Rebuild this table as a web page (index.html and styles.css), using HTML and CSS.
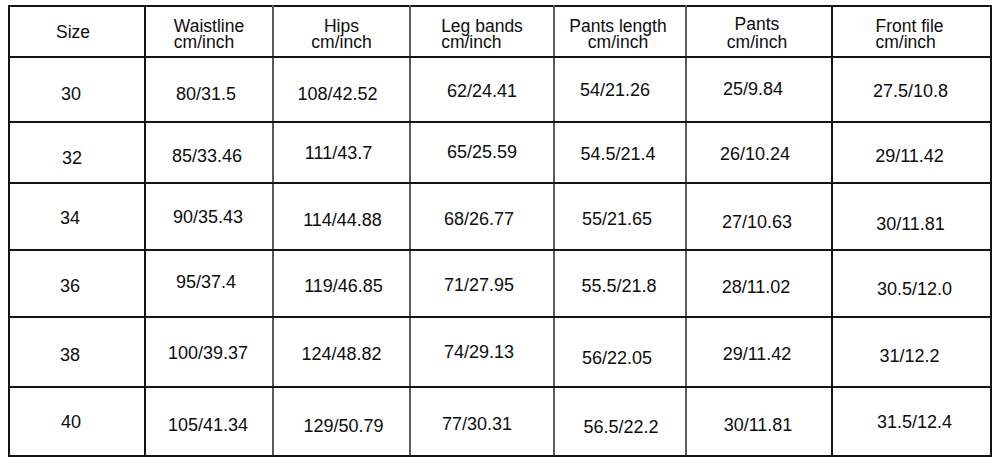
FILE: index.html
```html
<!DOCTYPE html>
<html>
<head>
<meta charset="utf-8">
<link rel="stylesheet" href="styles.css">
</head>
<body>
<table class="size-table">
  <colgroup>
    <col class="c1"><col class="c2"><col class="c3"><col class="c4"><col class="c5"><col class="c6"><col class="c7">
  </colgroup>
  <thead>
    <tr class="row-head">
      <th class="l4 h-size"><span class="line">Size</span></th>
      <th><span class="stack left"><span class="line">Waistline</span><span class="line">cm/inch</span></span></th>
      <th><span class="stack"><span class="line">Hips</span><span class="line">cm/inch</span></span></th>
      <th><span class="stack left"><span class="line">Leg bands</span><span class="line">cm/inch</span></span></th>
      <th class="l2"><span class="stack"><span class="line">Pants length</span><span class="line">cm/inch</span></span></th>
      <th class="l2 h-pants"><span class="stack"><span class="line">Pants</span><span class="line">cm/inch</span></span></th>
      <th class="l2"><span class="stack left"><span class="line">Front file</span><span class="line">cm/inch</span></span></th>
    </tr>
  </thead>
  <tbody>
    <tr class="row-1">
      <td class="l6 d5">30</td><td class="l3 d5">80/31.5</td><td class="l4 d5">108/42.52</td><td class="d2">62/24.41</td><td class="l5 d1">54/21.26</td><td class="l6 d0">25/9.84</td><td class="l1 d2">27.5/10.8</td>
    </tr>
    <tr class="row-2">
      <td class="l5 d6">32</td><td class="l2 d4">85/33.46</td><td class="l3 d1">111/43.7</td><td class="d0">65/25.59</td><td class="l2 d2">54.5/21.4</td><td class="l4 d2">26/10.24</td><td class="l2 d4">29/11.42</td>
    </tr>
    <tr class="row-3">
      <td class="l7 d2">34</td><td class="l1 d1">90/35.43</td><td class="s1 d4">114/44.88</td><td class="l3 d3">68/26.77</td><td class="l3 d3">55/21.65</td><td class="l2 d6">27/10.63</td><td class="l1 d8">30/11.81</td>
    </tr>
    <tr class="row-4">
      <td class="l7 d3">36</td><td class="l3 u1">95/37.4</td><td class="s2 d3">119/46.85</td><td class="l3 d2">71/27.95</td><td class="l1 d3">55.5/21.8</td><td class="l3 d4">28/11.02</td><td class="s3 d6">30.5/12.0</td>
    </tr>
    <tr class="row-5">
      <td class="l7 d3">38</td><td class="l1 d1">100/39.37</td><td class="d2">124/48.82</td><td class="l3 d0">74/29.13</td><td class="l3 d6">56/22.05</td><td class="l2 d2">29/11.42</td><td class="l2 d4">31/12.2</td>
    </tr>
    <tr class="row-6">
      <td class="l6 d1">40</td><td class="l1 d4">105/41.34</td><td class="s2 d5">129/50.79</td><td class="l5 d3">77/30.31</td><td class="s1 d6">56.5/22.2</td><td class="l1 d4">30/11.81</td><td class="s3 d1">31.5/12.4</td>
    </tr>
  </tbody>
</table>
</body>
</html>
```
FILE: styles.css
```css
html, body {
  margin: 0;
  background: #ffffff;
}
body {
  padding: 5px 0 0 8px;
  font-family: "Liberation Sans", Arial, sans-serif;
  color: #0d0d0d;
}
.size-table {
  border-collapse: collapse;
  table-layout: fixed;
  width: 982px;
}
.c1 { width: 136px; }
.c2 { width: 128px; }
.c3 { width: 137px; }
.c4 { width: 144px; }
.c5 { width: 132px; }
.c6 { width: 146px; }
.c7 { width: 159px; }

.size-table th,
.size-table td {
  border: 2px solid #141414;
  padding: 0;
  text-align: center;
  vertical-align: middle;
  font-weight: normal;
}
/* lighter vertical rules seen in the scan */
.size-table th:nth-child(2),
.size-table td:nth-child(2),
.size-table th:nth-child(3),
.size-table td:nth-child(3),
.size-table th:nth-child(4),
.size-table td:nth-child(4),
.size-table th:nth-child(5),
.size-table td:nth-child(5) {
  border-right-color: #5a5a5a;
}

.size-table td {
  font-size: 18px;
}
.size-table th {
  font-size: 17.5px;
  line-height: 16px;
  padding-top: 4px;
}
.size-table .h-size { padding-top: 0; }

.stack {
  display: inline-block;
}
.stack.left {
  text-align: left;
}
.line {
  display: block;
  white-space: nowrap;
}
.size-table .h-pants { padding-top: 2px; }
.h-pants .line:first-child { margin-bottom: 2px; }

.row-head { height: 51px; }
.row-1 { height: 65px; }
.row-2 { height: 61px; }
.row-3 { height: 67px; }
.row-4 { height: 67px; }
.row-5 { height: 70px; }
.row-6 { height: 69px; }

/* small scan offsets: shift text left (l) / right (s) / down (d) / up (u) */
.size-table .l1 { padding-right: 2px; }
.size-table .l2 { padding-right: 4px; }
.size-table .l3 { padding-right: 6px; }
.size-table .l4 { padding-right: 8px; }
.size-table .l5 { padding-right: 10px; }
.size-table .l6 { padding-right: 12px; }
.size-table .l7 { padding-right: 14px; }
.size-table .s1 { padding-left: 2px; }
.size-table .s2 { padding-left: 4px; }
.size-table .s3 { padding-left: 6px; }
.size-table .d0 { padding-top: 0; }
.size-table .d1 { padding-top: 2px; }
.size-table .d2 { padding-top: 4px; }
.size-table .d3 { padding-top: 6px; }
.size-table .d4 { padding-top: 8px; }
.size-table .d5 { padding-top: 10px; }
.size-table .d6 { padding-top: 12px; }
.size-table .d8 { padding-top: 16px; }
.size-table .u1 { padding-bottom: 2px; }
```
